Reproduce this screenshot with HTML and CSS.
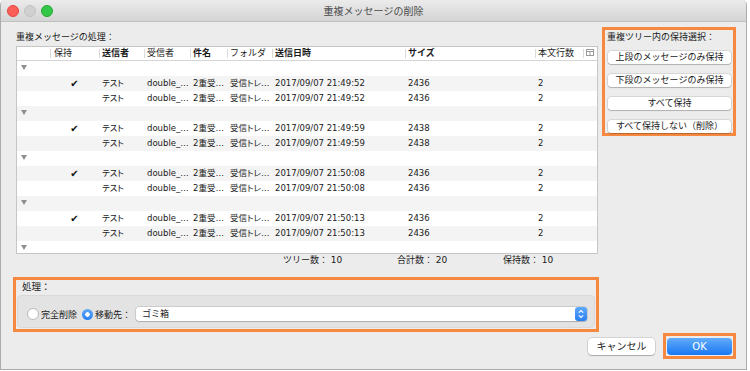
FILE: index.html
```html
<!DOCTYPE html>
<html lang="ja">
<head>
  <meta charset="UTF-8">
  <meta name="viewport" content="width=device-width, initial-scale=1.0">
  <title>重複メッセージの削除</title>
  <link rel="stylesheet" href="styles.css">
</head>
<body>
  <div class="window">
    <div class="titlebar">
      <div class="lights">
        <span class="light red"></span>
        <span class="light gray"></span>
        <span class="light green"></span>
      </div>
      <div class="title">重複メッセージの削除</div>
      <div></div>
    </div>

    <div class="content">
      <div class="top">
        <!-- 重複リスト -->
        <div class="list-area">
          <div class="label">重複メッセージの処理：</div>
          <div class="table-wrap">
            <table class="dup-table">
              <colgroup>
                <col class="c-tree"><col class="c-keep"><col class="c-from"><col class="c-to">
                <col class="c-subj"><col class="c-folder"><col class="c-date"><col class="c-size">
                <col class="c-lines"><col class="c-menu">
              </colgroup>
              <thead>
                <tr>
                  <th class="first"></th>
                  <th class="keep-h">保持</th>
                  <th class="b">送信者</th>
                  <th>受信者</th>
                  <th class="b">件名</th>
                  <th>フォルダ</th>
                  <th class="b">送信日時</th>
                  <th class="b">サイズ</th>
                  <th>本文行数</th>
                  <th class="menu-h">
                    <svg width="8" height="8" viewBox="0 0 8 8">
                      <rect x="0.5" y="0.5" width="7" height="6" fill="none" stroke="#9a9a9a"/>
                      <line x1="0.5" y1="2.5" x2="7.5" y2="2.5" stroke="#9a9a9a"/>
                      <line x1="4" y1="2.5" x2="4" y2="6.5" stroke="#9a9a9a"/>
                    </svg>
                  </th>
                </tr>
              </thead>
              <tbody>
                <tr><td class="tree"><span class="disclose"></span></td><td></td><td></td><td></td><td></td><td></td><td></td><td></td><td></td><td></td></tr>
                <tr><td></td><td class="check">✔</td><td>テスト</td><td>double_…</td><td>2重受…</td><td>受信トレ…</td><td>2017/09/07 21:49:52</td><td>2436</td><td>2</td><td></td></tr>
                <tr><td></td><td></td><td>テスト</td><td>double_…</td><td>2重受…</td><td>受信トレ…</td><td>2017/09/07 21:49:52</td><td>2436</td><td>2</td><td></td></tr>

                <tr><td class="tree"><span class="disclose"></span></td><td></td><td></td><td></td><td></td><td></td><td></td><td></td><td></td><td></td></tr>
                <tr><td></td><td class="check">✔</td><td>テスト</td><td>double_…</td><td>2重受…</td><td>受信トレ…</td><td>2017/09/07 21:49:59</td><td>2438</td><td>2</td><td></td></tr>
                <tr><td></td><td></td><td>テスト</td><td>double_…</td><td>2重受…</td><td>受信トレ…</td><td>2017/09/07 21:49:59</td><td>2438</td><td>2</td><td></td></tr>

                <tr><td class="tree"><span class="disclose"></span></td><td></td><td></td><td></td><td></td><td></td><td></td><td></td><td></td><td></td></tr>
                <tr><td></td><td class="check">✔</td><td>テスト</td><td>double_…</td><td>2重受…</td><td>受信トレ…</td><td>2017/09/07 21:50:08</td><td>2436</td><td>2</td><td></td></tr>
                <tr><td></td><td></td><td>テスト</td><td>double_…</td><td>2重受…</td><td>受信トレ…</td><td>2017/09/07 21:50:08</td><td>2436</td><td>2</td><td></td></tr>

                <tr><td class="tree"><span class="disclose"></span></td><td></td><td></td><td></td><td></td><td></td><td></td><td></td><td></td><td></td></tr>
                <tr><td></td><td class="check">✔</td><td>テスト</td><td>double_…</td><td>2重受…</td><td>受信トレ…</td><td>2017/09/07 21:50:13</td><td>2436</td><td>2</td><td></td></tr>
                <tr><td></td><td></td><td>テスト</td><td>double_…</td><td>2重受…</td><td>受信トレ…</td><td>2017/09/07 21:50:13</td><td>2436</td><td>2</td><td></td></tr>

                <tr><td class="tree"><span class="disclose"></span></td><td></td><td></td><td></td><td></td><td></td><td></td><td></td><td></td><td></td></tr>
              </tbody>
            </table>
          </div>
          <div class="stats">
            <span class="stat-tree">ツリー数： 10</span>
            <span class="stat-total">合計数： 20</span>
            <span>保持数： 10</span>
          </div>
        </div>

        <!-- 保持選択 -->
        <div class="keep-panel">
          <div class="keep-label">重複ツリー内の保持選択：</div>
          <button class="keep-btn">上段のメッセージのみ保持</button>
          <button class="keep-btn">下段のメッセージのみ保持</button>
          <button class="keep-btn">すべて保持</button>
          <button class="keep-btn">すべて保持しない（削除）</button>
        </div>
      </div>

      <!-- 処理 -->
      <div class="process">
        <div class="proc-label">処理：</div>
        <div class="proc-panel">
          <span class="radio"></span>
          <span class="radio-text">完全削除</span>
          <span class="radio on"></span>
          <span class="radio-text">移動先：</span>
          <div class="select">
            <span class="select-text">ゴミ箱</span>
            <span class="stepper">
              <svg width="12" height="14" viewBox="0 0 12 14">
                <polyline points="3.8,5.6 6,3.6 8.2,5.6" fill="none" stroke="#fff" stroke-width="1.1"/>
                <polyline points="3.8,8.4 6,10.4 8.2,8.4" fill="none" stroke="#fff" stroke-width="1.1"/>
              </svg>
            </span>
          </div>
        </div>
      </div>

      <div class="actions">
        <button class="btn-cancel">キャンセル</button>
        <div class="ok-frame"><button class="btn-ok">OK</button></div>
      </div>
    </div>
  </div>
</body>
</html>
```

FILE: styles.css
```css
* {
  box-sizing: border-box;
}

body {
  margin: 0;
  background: #fff;
  font-family: "DejaVu Sans", "Noto Sans CJK JP", sans-serif;
  font-size: 9px;
  color: #1a1a1a;
}

button {
  font-family: inherit;
  color: inherit;
  border: none;
  padding: 0;
}

.window {
  width: 747px;
  height: 370px;
  background: #ececec;
  border: 1px solid #acacac;
  border-top: none;
  border-radius: 5px 5px 0 0;
  overflow: hidden;
  display: flex;
  flex-direction: column;
}

/* タイトルバー */
.titlebar {
  height: 22px;
  background: linear-gradient(#ebebeb, #d4d4d4);
  border-bottom: 1px solid #c0c0c0;
  display: grid;
  grid-template-columns: 1fr auto 1fr;
  align-items: center;
}

.lights {
  display: flex;
  gap: 5px;
  padding-left: 6px;
}

.light {
  width: 12px;
  height: 12px;
  border-radius: 50%;
}

.light.red {
  background: #fc5f57;
  border: 0.5px solid #e2463f;
}

.light.gray {
  background: #d0d0d0;
  border: 0.5px solid #c2c2c2;
}

.light.green {
  background: #33c748;
  border: 0.5px solid #25a935;
}

.title {
  font-size: 10px;
  color: #4b4b4b;
}

/* 本体 */
.content {
  flex: 1;
  padding: 5px 10px 0 12px;
  display: flex;
  flex-direction: column;
}

.top {
  display: flex;
  gap: 4px;
}

.list-area {
  width: 582px;
  margin-left: 3px;
  padding-top: 4px;
}

.label {
  line-height: 12px;
  margin-bottom: 3px;
}

.table-wrap {
  height: 208px;
  border: 1px solid #c6c6c6;
  background: #fff;
  overflow: hidden;
}

.dup-table {
  width: 580px;
  table-layout: fixed;
  border-collapse: collapse;
}

.c-tree { width: 33px; }
.c-keep { width: 49px; }
.c-from { width: 45px; }
.c-to { width: 46px; }
.c-subj { width: 37px; }
.c-folder { width: 45px; }
.c-date { width: 133px; }
.c-size { width: 130px; }
.c-lines { width: 48px; }
.c-menu { width: 14px; }

.dup-table th {
  position: relative;
  height: 13px;
  padding: 0 3px;
  border-bottom: 1px solid #d6d6d6;
  text-align: left;
  font-weight: normal;
  font-size: 9px;
  line-height: 12px;
  white-space: nowrap;
  overflow: hidden;
}

.dup-table th::before {
  content: "";
  position: absolute;
  left: 0;
  top: 2px;
  bottom: 2px;
  border-left: 1px solid #dadada;
}

.dup-table th.first::before {
  display: none;
}

.dup-table th.b {
  font-weight: bold;
}

.dup-table th.keep-h {
  padding-left: 4px;
}

.dup-table th.menu-h {
  padding: 0 0 0 3px;
}

.dup-table th.menu-h svg {
  display: block;
}

.dup-table td {
  height: 15px;
  padding: 0 0 0 3px;
  font-size: 8.5px;
  line-height: 15px;
  white-space: nowrap;
  overflow: hidden;
  font-feature-settings: "palt";
}

.dup-table tbody tr:nth-child(even) {
  background: #f4f4f4;
}

.dup-table td.tree {
  padding-left: 4px;
}

.disclose {
  display: inline-block;
  vertical-align: middle;
  border-left: 3.5px solid transparent;
  border-right: 3.5px solid transparent;
  border-top: 5px solid #8f8f8f;
  margin-top: -2px;
}

.dup-table td.check {
  text-align: center;
  padding: 0;
  font-size: 10px;
  color: #111;
}

.stats {
  display: flex;
  height: 12px;
  line-height: 12px;
  padding-left: 267px;
}

.stat-tree {
  width: 114px;
}

.stat-total {
  width: 106px;
}

/* 保持選択 */
.keep-panel {
  width: 134px;
  height: 109px;
  border: 3px solid #f6893f;
}

.keep-label {
  padding: 1px 0 0 2px;
  line-height: 12px;
  margin-bottom: 8px;
}

.keep-btn {
  display: block;
  width: 123px;
  height: 13px;
  margin: 0 0 10px 3px;
  background: #fff;
  border-radius: 3px;
  box-shadow: 0 0 0 0.5px rgba(0, 0, 0, 0.18), 0 1px 1px rgba(0, 0, 0, 0.18);
  font-size: 9px;
  line-height: 13px;
  text-align: center;
}

.keep-btn:last-child {
  margin-bottom: 0;
}

/* 処理 */
.process {
  width: 586px;
  height: 55px;
  margin-top: 11px;
  border: 3px solid #f6893f;
}

.proc-label {
  padding: 1px 0 0 6px;
  line-height: 12px;
  font-size: 9.5px;
}

.proc-panel {
  height: 33px;
  margin: 2px 1px 1px;
  background: #e3e3e3;
  border: 1px solid #d9d9d9;
  border-radius: 4px;
  display: flex;
  align-items: center;
  padding: 5px 7px 0 9px;
}

.radio {
  width: 12px;
  height: 12px;
  flex: none;
  border-radius: 50%;
  background: #fff;
  border: 1px solid #b9b9b9;
}

.radio.on {
  width: 11px;
  height: 11px;
  margin-left: 5px;
  border: none;
  background: radial-gradient(circle, #fff 0 2px, transparent 2.5px), linear-gradient(#5ea8fb, #2a80f3);
}

.radio-text {
  margin-left: 2px;
}

.select {
  flex: 1;
  height: 14px;
  margin-left: 5px;
  background: #fff;
  border-radius: 3px;
  box-shadow: 0 0 0 0.5px rgba(0, 0, 0, 0.2), 0 1px 1px rgba(0, 0, 0, 0.15);
  display: flex;
  align-items: center;
}

.select-text {
  flex: 1;
  padding-left: 6px;
  line-height: 14px;
}

.stepper {
  width: 12px;
  height: 14px;
  border-radius: 3px;
  background: linear-gradient(#5ea8fb, #2a80f3);
}

.stepper svg {
  display: block;
}

/* ボタン */
.actions {
  display: flex;
  justify-content: flex-end;
  align-items: center;
  gap: 8px;
  margin-top: 1px;
}

.btn-cancel {
  width: 67px;
  height: 17px;
  background: #fff;
  border-radius: 4px;
  box-shadow: 0 0 0 0.5px rgba(0, 0, 0, 0.2), 0 1px 1px rgba(0, 0, 0, 0.2);
  font-size: 10px;
  line-height: 17px;
}

.ok-frame {
  width: 73px;
  height: 26px;
  border: 3px solid #f6893f;
  padding: 2px 1px 1px;
}

.btn-ok {
  display: block;
  width: 65px;
  height: 17px;
  border-radius: 4px;
  background: linear-gradient(#62acfb, #1a78f3);
  color: #fff;
  font-size: 10px;
  line-height: 17px;
}
```
